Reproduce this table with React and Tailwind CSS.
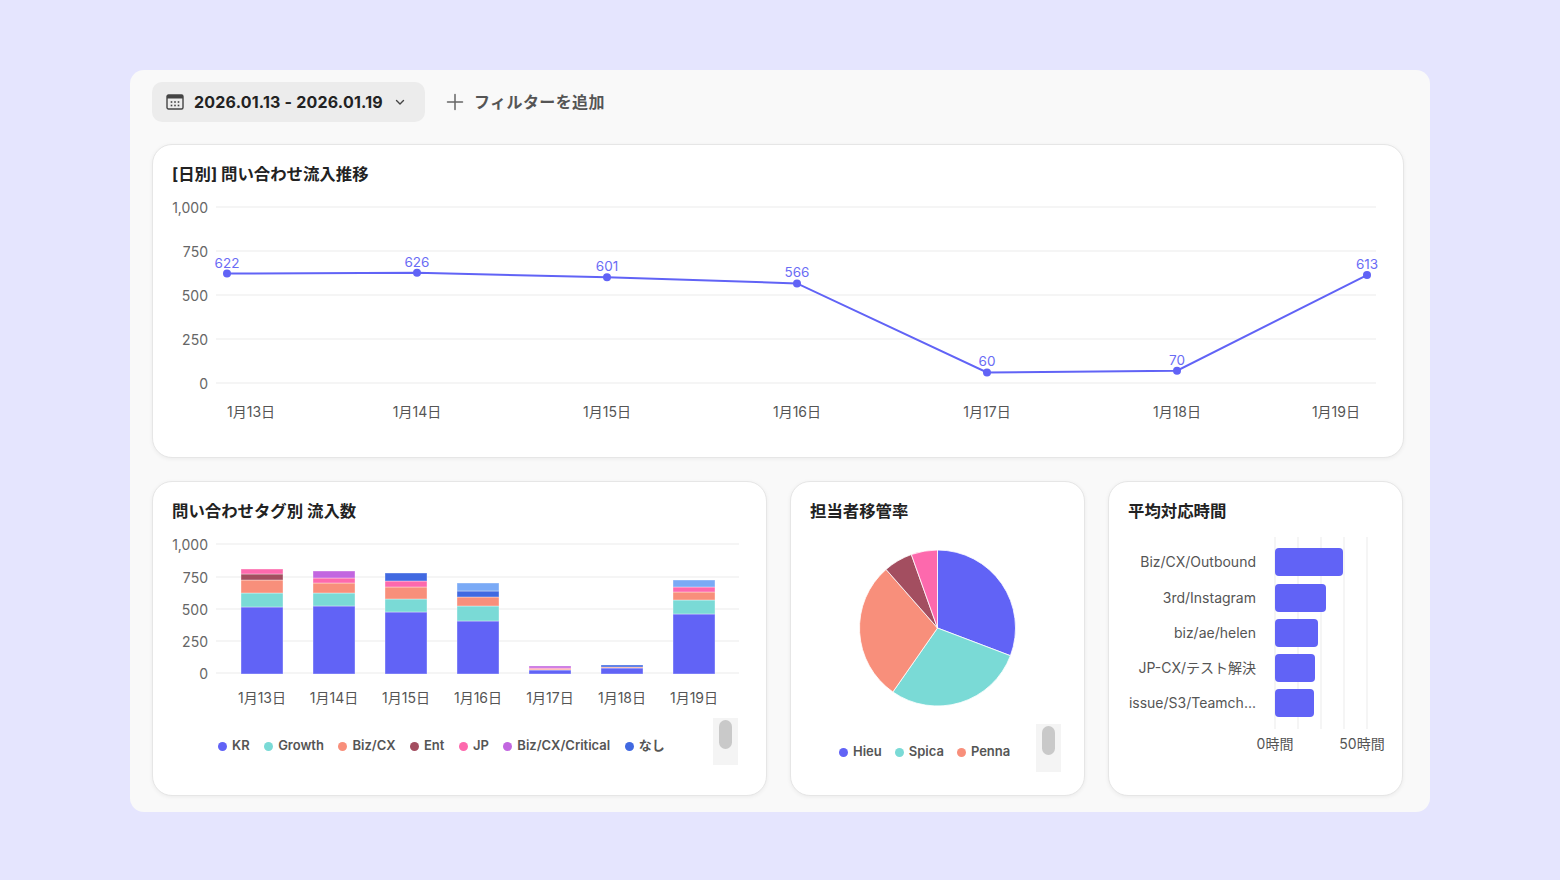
import React from 'react';

const BLUE = '#6163f6';

const lineData = [
  { label: '1月13日', v: 622 },
  { label: '1月14日', v: 626 },
  { label: '1月15日', v: 601 },
  { label: '1月16日', v: 566 },
  { label: '1月17日', v: 60 },
  { label: '1月18日', v: 70 },
  { label: '1月19日', v: 613 },
];

const C = {
  kr: '#6163f6',
  growth: '#7adad6',
  biz: '#f88f7b',
  ent: '#a34e60',
  jp: '#fd69ad',
  crit: '#c266e0',
  none: '#4169e1',
  extra: '#7aaaf6',
};

// stacked segments: [color, top y on page], from the bottom up
const bars = [
  { label: '1月13日', segs: [[C.kr, 606], [C.growth, 592], [C.biz, 579], [C.ent, 573], [C.jp, 568]] },
  { label: '1月14日', segs: [[C.kr, 605], [C.growth, 592], [C.biz, 582], [C.jp, 577], [C.crit, 570]] },
  { label: '1月15日', segs: [[C.kr, 611], [C.growth, 598], [C.biz, 586], [C.jp, 580], [C.none, 572]] },
  { label: '1月16日', segs: [[C.kr, 620], [C.growth, 605], [C.biz, 596], [C.none, 590], [C.extra, 582]] },
  { label: '1月17日', segs: [[C.kr, 669], [C.biz, 668], [C.jp, 667], [C.crit, 665]] },
  { label: '1月18日', segs: [[C.kr, 667], [C.biz, 666], [C.none, 664]] },
  { label: '1月19日', segs: [[C.kr, 613], [C.growth, 599], [C.biz, 591], [C.jp, 586], [C.extra, 579]] },
];

const tagLegend = [
  ['KR', C.kr],
  ['Growth', C.growth],
  ['Biz/CX', C.biz],
  ['Ent', C.ent],
  ['JP', C.jp],
  ['Biz/CX/Critical', C.crit],
  ['なし', C.none],
];

const pieSlices = [
  { from: 0, to: 110.8, color: C.kr },
  { from: 110.8, to: 214.9, color: C.growth },
  { from: 214.9, to: 318.7, color: C.biz },
  { from: 318.7, to: 340.4, color: C.ent },
  { from: 340.4, to: 360, color: C.jp },
];

const hbars = [
  { label: 'Biz/CX/Outbound', w: 68 },
  { label: '3rd/Instagram', w: 51 },
  { label: 'biz/ae/helen', w: 43 },
  { label: 'JP-CX/テスト解決', w: 40 },
  { label: 'issue/S3/Teamch...', w: 39 },
];

function slicePath(cx, cy, r, a0, a1) {
  const p = (a) => {
    const rad = ((a - 90) * Math.PI) / 180;
    return [cx + r * Math.cos(rad), cy + r * Math.sin(rad)];
  };
  const [x0, y0] = p(a0);
  const [x1, y1] = p(a1);
  const large = a1 - a0 > 180 ? 1 : 0;
  return `M${cx},${cy} L${x0},${y0} A${r},${r} 0 ${large} 1 ${x1},${y1} Z`;
}

function CalendarIcon() {
  return (
    <svg width="18" height="16" viewBox="0 0 18 16" fill="none">
      <rect x="1" y="1" width="16" height="14" rx="1.5" stroke="#444" strokeWidth="1.4" />
      <rect x="1" y="1" width="16" height="3.5" fill="#444" />
      {[5.5, 9, 12.5].map((x) =>
        [8, 11.5].map((y) => <rect key={`${x}-${y}`} x={x - 0.8} y={y - 0.8} width="1.6" height="1.6" fill="#444" />)
      )}
    </svg>
  );
}

function Card({ title, className = '', children }) {
  return (
    <div className={`rounded-[20px] border border-[#e6e6e6] bg-white shadow-[0_1px_4px_rgba(0,0,0,0.06)] ${className}`}>
      <div className="px-[19px] pt-[19px] text-[16.4px] font-bold leading-[20px] text-[#222]">{title}</div>
      {children}
    </div>
  );
}

function LegendDot({ label, color }) {
  return (
    <div className="flex items-center gap-[5px]">
      <span className="h-[9px] w-[9px] rounded-full" style={{ background: color }} />
      <span className="text-[13px] font-semibold text-[#555]">{label}</span>
    </div>
  );
}

function ScrollBox({ className = '' }) {
  return (
    <div className={`flex h-[47px] w-[25px] justify-center bg-[#f4f4f4] pt-[2px] ${className}`}>
      <div className="h-[29px] w-[13px] rounded-full bg-[#c9c9c9]" />
    </div>
  );
}

function LineChart() {
  const ox = 152;
  const oy = 183;
  const grid = [
    ['1,000', 207],
    ['750', 251],
    ['500', 295],
    ['250', 339],
    ['0', 383],
  ];
  const pts = lineData.map((d, i) => [226 + i * 190 - ox, 383 - d.v * 0.176 - oy]);
  return (
    <svg width="1252" height="262" className="block">
      {grid.map(([t, y]) => (
        <g key={t}>
          <line x1={63} x2={1223} y1={y - oy - 1} y2={y - oy - 1} stroke="#ebebeb" />
          <text x={55} y={y - oy - 1} textAnchor="end" dominantBaseline="central" fontSize="14" fill="#666">
            {t}
          </text>
        </g>
      ))}
      <polyline points={pts.map(([x, y]) => `${x},${y - 1}`).join(' ')} fill="none" stroke={BLUE} strokeWidth="2" />
      {pts.map(([x, y], i) => (
        <g key={i}>
          <circle cx={x} cy={y - 1} r="4" fill={BLUE} />
          <text x={x} y={y - 12} textAnchor="middle" dominantBaseline="central" fontSize="13.5" fill="#6a6cf5">
            {lineData[i].v}
          </text>
        </g>
      ))}
      {lineData.map((d, i) => {
        const x = 226 + i * 190 - ox;
        const anchor = i === 0 ? 'start' : i === lineData.length - 1 ? 'end' : 'middle';
        const tx = i === lineData.length - 1 ? 1207 : x;
        return (
          <text key={d.label} x={tx} y={410 - oy} textAnchor={anchor} dominantBaseline="central" fontSize="14" fill="#555">
            {d.label}
          </text>
        );
      })}
    </svg>
  );
}

function TagChart() {
  const ox = 152;
  const oy = 520;
  const grid = [
    ['1,000', 544],
    ['750', 577],
    ['500', 609],
    ['250', 641],
    ['0', 673],
  ];
  return (
    <svg width="615" height="195" className="block">
      {grid.map(([t, y]) => (
        <g key={t}>
          <line x1={63} x2={586} y1={y - oy - 1} y2={y - oy - 1} stroke="#ebebeb" />
          <text x={55} y={y - oy - 1} textAnchor="end" dominantBaseline="central" fontSize="14" fill="#666">
            {t}
          </text>
        </g>
      ))}
      {bars.map((b, i) => {
        const x = 240 + i * 72 - ox;
        let bottom = 673;
        return (
          <g key={b.label}>
            {b.segs.map(([color, top], j) => {
              const r = (
                <rect
                  key={j}
                  x={x}
                  y={top - oy}
                  width="42"
                  height={bottom - top}
                  fill={color}
                  stroke="#ffffff"
                  strokeOpacity="0.45"
                  strokeWidth="0.8"
                />
              );
              bottom = top;
              return r;
            })}
            <text x={x + 21} y={697 - oy - 1} textAnchor="middle" dominantBaseline="central" fontSize="14" fill="#555">
              {b.label}
            </text>
          </g>
        );
      })}
    </svg>
  );
}

function PieChart() {
  return (
    <svg width="293" height="203" className="block">
      {pieSlices.map((s, i) => (
        <path key={i} d={slicePath(146.5, 107, 78, s.from, s.to)} fill={s.color} stroke="#fff" strokeWidth="0.8" />
      ))}
    </svg>
  );
}

function HoursChart() {
  const ox = 1109;
  const oy = 520;
  const gx = [1275, 1298, 1321, 1344, 1367];
  const rows = [548, 584, 619, 654, 689];
  return (
    <svg width="293" height="240" className="block">
      {gx.map((x) => (
        <line key={x} x1={x - ox} x2={x - ox} y1={16} y2={208} stroke="#ebebeb" />
      ))}
      {hbars.map((b, i) => (
        <g key={b.label}>
          <text x={147} y={rows[i] + 12 - oy} textAnchor="end" dominantBaseline="central" fontSize="14" fill="#555">
            {b.label}
          </text>
          <rect x={1275 - ox} y={rows[i] - 1 - oy} width={b.w} height="28" rx="4" fill={BLUE} />
        </g>
      ))}
      <text x={1275 - ox} y={742 - oy} textAnchor="middle" dominantBaseline="central" fontSize="14" fill="#555">
        0時間
      </text>
      <text x={1362 - ox} y={742 - oy} textAnchor="middle" dominantBaseline="central" fontSize="14" fill="#555">
        50時間
      </text>
    </svg>
  );
}

export default function App() {
  return (
    <div className="h-[880px] w-full bg-[#e5e5fe] pt-[70px] font-[Inter,'Noto_Sans_CJK_JP',sans-serif]">
      <div className="mx-auto h-[742px] w-[1300px] rounded-[14px] bg-[#f9f9f9] pb-[16px] pl-[22px] pr-[26px] pt-[12px]">
        {/* Toolbar */}
        <div className="flex items-center gap-[21px]">
          <button
            type="button"
            className="flex h-[40px] w-[273px] items-center gap-[10px] rounded-[10px] bg-[#ececec] pl-[14px] text-[16px] font-bold text-[#222]"
          >
            <CalendarIcon />
            <span className="tracking-[0.2px]">2026.01.13 - 2026.01.19</span>
            <svg width="12" height="12" viewBox="0 0 12 12" className="ml-[1px]" fill="none">
              <path d="M2.5 4.5 L6 8 L9.5 4.5" stroke="#444" strokeWidth="1.4" strokeLinecap="round" strokeLinejoin="round" />
            </svg>
          </button>
          <button type="button" className="flex items-center gap-[10px] text-[16px] font-semibold tracking-[0.4px] text-[#555]">
            <svg width="18" height="18" viewBox="0 0 18 18" fill="none">
              <path d="M9 1.5 V16.5 M1.5 9 H16.5" stroke="#666" strokeWidth="1.5" strokeLinecap="round" />
            </svg>
            フィルターを追加
          </button>
        </div>

        {/* Daily trend */}
        <Card title="[日別] 問い合わせ流入推移" className="mt-[22px] h-[314px]">
          <LineChart />
        </Card>

        {/* Bottom row */}
        <div className="mt-[23px] flex gap-[23px]">
          <Card title="問い合わせタグ別 流入数" className="h-[315px] w-[615px]">
            <TagChart />
            <div className="mt-[2px] flex items-center justify-between pl-[65px] pr-[28px]">
              <div className="flex items-center gap-[14.5px] pt-[9px]">
                {tagLegend.map(([l, c]) => (
                  <LegendDot key={l} label={l} color={c} />
                ))}
              </div>
              <ScrollBox />
            </div>
          </Card>

          <Card title="担当者移管率" className="h-[315px] w-[295px]">
            <PieChart />
            <div className="flex items-center justify-between pl-[48px] pr-[23px]">
              <div className="flex items-center gap-[13px] pt-[8px]">
                <LegendDot label="Hieu" color={C.kr} />
                <LegendDot label="Spica" color={C.growth} />
                <LegendDot label="Penna" color={C.biz} />
              </div>
              <ScrollBox className="h-[48px]" />
            </div>
          </Card>

          <Card title="平均対応時間" className="h-[315px] w-[295px]">
            <HoursChart />
          </Card>
        </div>
      </div>
    </div>
  );
}
